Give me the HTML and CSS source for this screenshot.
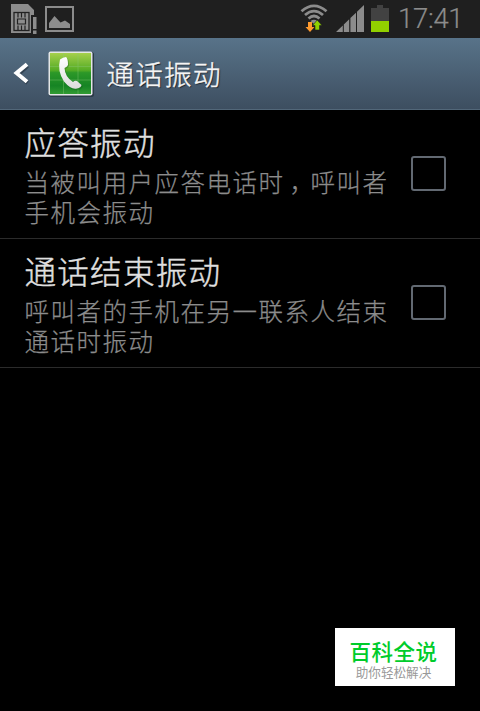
FILE: index.html
```html
<!DOCTYPE html>
<html lang="zh-CN">
<head>
<meta charset="utf-8">
<title>通话振动</title>
<link rel="stylesheet" href="styles.css">
</head>
<body>
<div class="status">
  <svg class="sim" width="27" height="30" viewBox="0 0 27 30">
    <path fill="#8c8c8c" d="M0 0H17L23 6V12H20V29H0Z"/>
    <rect x="3" y="8.500" width="15" height="18" fill="#8c8c8c" stroke="#222" stroke-width="1.300"/>
    <path stroke="#222" stroke-width="1.200" fill="none" d="M7 9V13.500M10.500 9V13.500M14 9V13.500M7 21.500V26M10.500 21.500V26M14 21.500V26M6.500 15H14.500V20H6.500Z"/>
    <path fill="#1f1f1f" d="M20 11H27V30H20Z"/>
    <path fill="#8c8c8c" d="M22 13H25.500V25H22ZM22 26.500H25.500V30H22Z"/>
  </svg>
  <svg class="photo" width="30" height="26" viewBox="0 0 30 26">
    <rect x="1" y="1" width="27" height="24" fill="none" stroke="#8c8c8c" stroke-width="2"/>
    <path fill="#8c8c8c" d="M4 22V17L9.500 10L15.500 16.500L20 14.500L25 18V22Z"/>
  </svg>
  <svg class="wifi" width="28" height="30" viewBox="0 0 28 30">
    <g fill="none" stroke="#8c8c8c" stroke-width="2.800">
      <path d="M1.500 7.200Q14 -3.500 26.500 7.200"/>
      <path d="M5 11Q14 3.300 23 11"/>
      <path d="M8.500 14.500Q14 9.500 19.500 14.500"/>
    </g>
    <path fill="#8c8c8c" d="M10.500 17Q14 14.500 17.500 17L14 20Z"/>
    <path fill="#ff9a2e" d="M8 18H12V23H14.500L10 28L5.500 23H8Z"/>
    <path fill="#8fd000" stroke="#1f1f1f" stroke-width=".6" d="M15 26H19.500V21.500H22L17.200 16L12.500 21.500H15Z"/>
  </svg>
  <svg class="signal" width="28" height="27" viewBox="0 0 28 27">
    <path fill="#8c8c8c" d="M0 27L6.800 20.400V27ZM7.800 27V19.500L13.200 14.300V27ZM14.400 27V13L20 7.700V27ZM21 27V6.700L28 0V27Z"/>
  </svg>
  <svg class="battery" width="18" height="27" viewBox="0 0 18 27">
    <path fill="#424242" d="M6 0H12V3H18V17H0V3H6Z"/>
    <rect y="16" width="18" height="11" fill="#92d000"/>
  </svg>
  <span class="clock">17:41</span>
</div>
<header class="bar">
  <svg class="back" width="16" height="24" viewBox="0 0 16 24">
    <path fill="none" stroke="#263442" stroke-width="4" d="M14.500 4L5 12.500L14.500 21" opacity=".7"/>
    <path fill="none" stroke="#fff" stroke-width="4" d="M14 2.200L3.500 11L14 19.800"/>
  </svg>
  <svg class="app" width="46" height="46" viewBox="0 0 46 46">
    <defs>
      <linearGradient id="g" x1="0" y1="0" x2="0" y2="1">
        <stop offset="0" stop-color="#a6d04c"/><stop offset=".42" stop-color="#55ac25"/>
        <stop offset=".48" stop-color="#2c9828"/><stop offset=".8" stop-color="#168424"/><stop offset="1" stop-color="#319b32"/>
      </linearGradient>
      <linearGradient id="w" x1="0" y1="0" x2="0" y2="1">
        <stop offset="0" stop-color="#fff"/><stop offset="1" stop-color="#dcdcdc"/>
      </linearGradient>
    </defs>
    <rect x="1" y="1" width="45" height="45" rx="2.500" fill="#2b3a48"/>
    <rect x=".5" y=".5" width="44" height="44" rx="2" fill="#e4e6e6"/>
    <rect x="2" y="2" width="41" height="41" fill="url(#g)"/>
    <path stroke="#8ac878" stroke-width=".7" opacity=".55" d="M15.500 2V43M30 2V43M2 15.500H43M2 29H43"/>
    <path fill="#125c18" opacity=".35" transform="translate(1 1)" d="M12 8Q15 5 18 6Q20 7 20 14Q19 16 16.500 17Q17 26 25 31Q27 29 29 30L34 34Q34 36 30 38Q23 40 16 31Q9 20 12 8Z"/>
    <path fill="url(#w)" d="M12 8.500Q15 6 18 6Q20 7 20 14Q19 16 16.500 17Q17 26 25 31Q27 29 29 30L33.500 34Q33 36.500 29 37.500Q23 39 16 30.500Q9 20 12 8.500Z"/>
  </svg>
  <h1>通话振动</h1>
</header>
<main>
  <section class="item">
    <div class="text">
      <h2>应答振动</h2>
      <p>当被叫用户应答电话时<span class="comma">，</span>呼叫者<br>手机会振动</p>
    </div>
    <span class="check"></span>
  </section>
  <section class="item">
    <div class="text">
      <h2>通话结束振动</h2>
      <p>呼叫者的手机在另一联系人结束<br>通话时振动</p>
    </div>
    <span class="check"></span>
  </section>
</main>
<aside class="badge">
  <strong>百科全说</strong>
  <small>助你轻松解决</small>
</aside>
</body>
</html>
```
FILE: styles.css
```css
* { box-sizing: border-box; margin: 0; padding: 0; }
body {
  width: 480px;
  height: 711px;
  overflow: hidden;
  background: #000;
  font-family: "Noto Sans CJK SC", sans-serif;
  font-weight: 300;
  display: flex;
  flex-direction: column;
}
svg { display: block; flex: none; }
.status {
  height: 38px;
  flex: none;
  background: #1f1f1f;
  display: flex;
  align-items: flex-start;
  padding-left: 11px;
}
.sim { margin-top: 4px; }
.photo { margin: 6px 0 0 7px; }
.wifi { margin: 4px 0 0 225px; }
.signal { margin: 5px 0 0 8px; }
.battery { margin: 5px 0 0 7px; }
.clock {
  margin-left: 9px;
  font: 300 27.500px/38px Roboto, sans-serif;
  letter-spacing: -.3px;
  color: #8c8c8c;
  -webkit-text-stroke: .2px #8c8c8c;
  white-space: nowrap;
}
.bar {
  height: 72px;
  flex: none;
  display: flex;
  align-items: center;
  padding-left: 13px;
  background: linear-gradient(#587389, #3d4e60);
  border-bottom: 1px solid #526779;
}
.back { margin-top: 1px; }
.app { margin: 1px 0 0 19px; }
.bar h1 {
  margin: -2px 0 0 12.500px;
  font-size: 27.500px;
  font-weight: 300;
  line-height: 40px;
  letter-spacing: 1.300px;
  color: #f5f5f5;
  -webkit-text-stroke: .4px #f5f5f5;
  text-shadow: 1px 1px 1px #17202a;
}
.item {
  height: 129px;
  display: flex;
  align-items: center;
  justify-content: space-between;
  padding: 0 34px 2px 24.500px;
  border-bottom: 1px solid #2b2b2b;
}
.text { white-space: nowrap; }
.text h2 {
  font-size: 31.500px;
  font-weight: 300;
  line-height: 42px;
  letter-spacing: 1.300px;
  color: #e0e0e0;
  -webkit-text-stroke: .4px #e0e0e0;
}
.text p {
  margin-top: 5px;
  font-size: 24.500px;
  line-height: 30px;
  letter-spacing: 1.500px;
  color: #8c8c8c;
  -webkit-text-stroke: .25px #8c8c8c;
}
.comma { position: relative; left: 5px; }
.check {
  width: 35px;
  height: 35px;
  flex: none;
  border: 2px solid #626972;
  border-radius: 3px;
}
.badge {
  position: absolute;
  left: 335px;
  top: 628px;
  width: 120px;
  height: 58px;
  background: #fff;
  padding: 9px 3px 0 0;
  text-align: center;
}
.badge strong {
  display: block;
  font-size: 21.500px;
  font-weight: 500;
  line-height: 27px;
  letter-spacing: .5px;
  color: #00cc2b;
}
.badge small {
  display: block;
  font-size: 12.600px;
  font-weight: 400;
  line-height: 15px;
  color: #999;
}
```
